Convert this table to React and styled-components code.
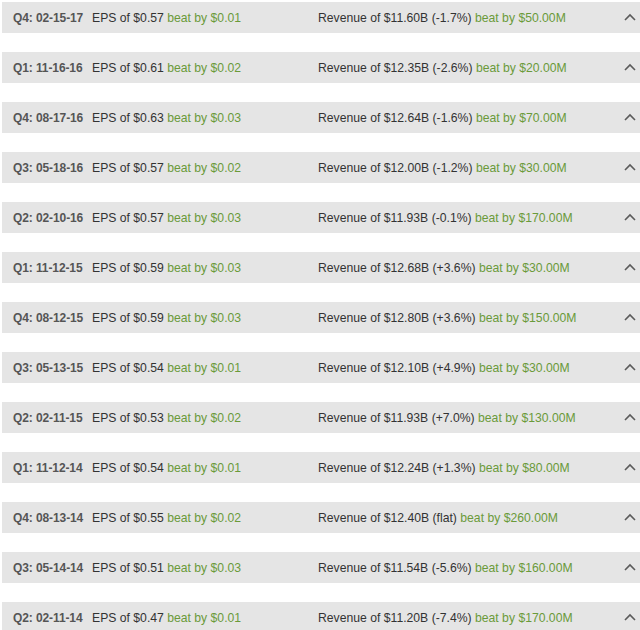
import React from 'react';
import styled, { createGlobalStyle } from 'styled-components';

const rows = [
    { q: 'Q4: 02-15-17', eps: '$0.57', epsBeat: '$0.01', rev: '$11.60B', chg: '(-1.7%)', revBeat: '$50.00M' },
    { q: 'Q1: 11-16-16', eps: '$0.61', epsBeat: '$0.02', rev: '$12.35B', chg: '(-2.6%)', revBeat: '$20.00M' },
    { q: 'Q4: 08-17-16', eps: '$0.63', epsBeat: '$0.03', rev: '$12.64B', chg: '(-1.6%)', revBeat: '$70.00M' },
    { q: 'Q3: 05-18-16', eps: '$0.57', epsBeat: '$0.02', rev: '$12.00B', chg: '(-1.2%)', revBeat: '$30.00M' },
    { q: 'Q2: 02-10-16', eps: '$0.57', epsBeat: '$0.03', rev: '$11.93B', chg: '(-0.1%)', revBeat: '$170.00M' },
    { q: 'Q1: 11-12-15', eps: '$0.59', epsBeat: '$0.03', rev: '$12.68B', chg: '(+3.6%)', revBeat: '$30.00M' },
    { q: 'Q4: 08-12-15', eps: '$0.59', epsBeat: '$0.03', rev: '$12.80B', chg: '(+3.6%)', revBeat: '$150.00M' },
    { q: 'Q3: 05-13-15', eps: '$0.54', epsBeat: '$0.01', rev: '$12.10B', chg: '(+4.9%)', revBeat: '$30.00M' },
    { q: 'Q2: 02-11-15', eps: '$0.53', epsBeat: '$0.02', rev: '$11.93B', chg: '(+7.0%)', revBeat: '$130.00M' },
    { q: 'Q1: 11-12-14', eps: '$0.54', epsBeat: '$0.01', rev: '$12.24B', chg: '(+1.3%)', revBeat: '$80.00M' },
    { q: 'Q4: 08-13-14', eps: '$0.55', epsBeat: '$0.02', rev: '$12.40B', chg: '(flat)', revBeat: '$260.00M' },
    { q: 'Q3: 05-14-14', eps: '$0.51', epsBeat: '$0.03', rev: '$11.54B', chg: '(-5.6%)', revBeat: '$160.00M' },
    { q: 'Q2: 02-11-14', eps: '$0.47', epsBeat: '$0.01', rev: '$11.20B', chg: '(-7.4%)', revBeat: '$170.00M' },
];

function Chevron() {
    return (
        <svg width="12" height="8" viewBox="0 0 12 8">
            <path d="M1 7 L6 2 L11 7" fill="none" stroke="#5a5a5a" strokeWidth="1.6" />
        </svg>
    );
}

function App() {
    return (
        <>
            <GlobalStyle />
            <List>
                {rows.map((r) => (
                    <Row key={r.q}>
                        <Quarter>{r.q}</Quarter>
                        <Cell>
                            EPS of {r.eps} <Beat>beat by {r.epsBeat}</Beat>
                        </Cell>
                        <Cell>
                            Revenue of {r.rev} {r.chg} <Beat>beat by {r.revBeat}</Beat>
                        </Cell>
                        <Toggle><Chevron /></Toggle>
                    </Row>
                ))}
            </List>
        </>
    );
}

const GlobalStyle = createGlobalStyle`
    body {
        margin: 0;
        background: #fff;
        font-family: "Liberation Sans", Arial, sans-serif;
        overflow: hidden;
    }
`;

const List = styled.div`
    display: flex;
    flex-direction: column;
    gap: 19px;
    padding: 2px 0 0 2px;
`;

const Row = styled.div`
    height: 31px;
    background: #e5e5e5;
    display: grid;
    grid-template-columns: 79px 226px 1fr 12px;
    align-items: center;
    padding: 0 4px 0 11px;
    font-size: 12px;
    color: #333;
    white-space: nowrap;
`;

const Quarter = styled.span`
    font-weight: bold;
    color: #555;
    letter-spacing: -0.1px;
`;

const Cell = styled.span`
    font-size: 12.2px;
`;

const Beat = styled.span`
    color: #6a9a3a;
`;

const Toggle = styled.span`
    display: flex;
    align-items: center;
    margin-top: -2px;
`;

export default App;
